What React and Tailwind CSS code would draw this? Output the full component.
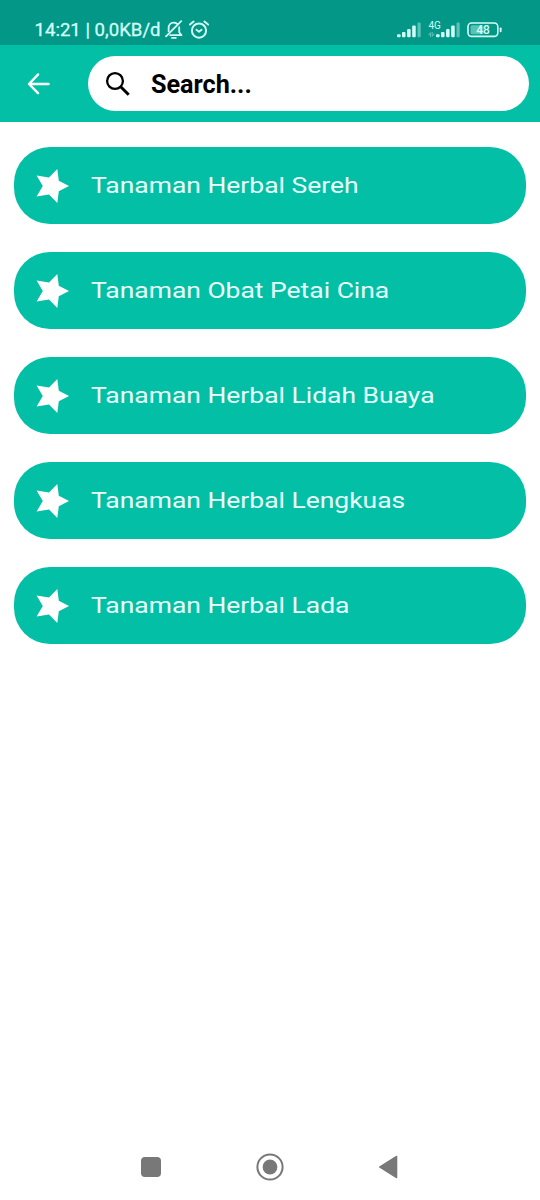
import React from 'react';

const tanaman = [
  { nama: 'Tanaman Herbal Sereh' },
  { nama: 'Tanaman Obat Petai Cina' },
  { nama: 'Tanaman Herbal Lidah Buaya' },
  { nama: 'Tanaman Herbal Lengkuas' },
  { nama: 'Tanaman Herbal Lada' },
];

const BellOff = () => (
  <svg className="w-[18px] h-5 shrink-0" viewBox="0 0 18 20" fill="none" stroke="currentColor" strokeWidth="1.8" strokeLinecap="round" strokeLinejoin="round">
    <path d="M3.6 11.2V8.2C3.6 4.8 5.8 2.6 8.6 2.6c1.4 0 2.6.4 3.5 1.2" />
    <path d="M14.2 7.2v5l2.3 3H5.2" />
    <path d="M16.2 1.2L1 16.4" />
    <path d="M7 17.9h3.8" strokeWidth="1.8" />
  </svg>
);

const Alarm = () => (
  <svg className="w-5 h-5 shrink-0" viewBox="0 0 20 20" fill="none" stroke="currentColor" strokeLinecap="round" strokeLinejoin="round">
    <circle cx="10" cy="10.6" r="7.1" strokeWidth="2" />
    <path d="M7.4 9.8l2.6 2 2.6-2" strokeWidth="1.8" />
    <path d="M.9 4.6L4.6 1.6M19.1 4.6l-3.7-3" strokeWidth="1.9" />
  </svg>
);

const Signal = () => (
  <svg className="w-6 h-4 shrink-0" viewBox="0 0 24 16" fill="currentColor">
    <rect x="0" y="12.3" width="3.6" height="3" rx="1" />
    <rect x="5" y="10" width="3.5" height="5.3" rx="1" />
    <rect x="10.1" y="7" width="3.5" height="8.3" rx="1" />
    <rect x="15.2" y="3.4" width="3.5" height="11.9" rx="1" />
    <rect x="20.5" y="0.5" width="3.2" height="14.8" rx="1" opacity=".42" />
  </svg>
);

const Battery = () => (
  <svg className="w-[35px] h-4 shrink-0" viewBox="0 0 35 16">
    <rect x="1" y="1" width="29.8" height="13.4" rx="3.6" fill="none" stroke="currentColor" strokeWidth="1.6" />
    <rect x="3.6" y="3.2" width="13" height="9" rx="1.5" fill="currentColor" opacity=".42" />
    <rect x="32.7" y="5.4" width="1.9" height="4.8" rx=".9" fill="currentColor" />
  </svg>
);

const Star = () => (
  <svg className="w-[34px] h-[34px] shrink-0" viewBox="-17 -17 34 34" fill="#fff">
    <path d="M17 0L6.8 5.2 5.3 17-3 8.6-15.4 10.5-9.2 0-15.4-10.5-3-8.6 5.3-17 6.8-5.2z" />
  </svg>
);

const StatusBar = () => (
  <div className="h-[45px] bg-[#029786] text-[#d3fff8] flex items-start justify-between pl-[34.5px] pr-[38px]">
    <div className="flex items-center mt-[19px] h-[21px]">
      <span className="text-[18.6px] leading-[21px] w-[130px] pt-0.5 whitespace-nowrap [-webkit-text-stroke:0.3px]">14:21 | 0,0KB/d</span>
      <BellOff />
      <div className="w-[6.5px]"></div>
      <Alarm />
    </div>
    <div className="flex mt-[22px] h-4">
      <Signal />
      <div className="relative ml-[15px]">
        <span className="absolute -left-[7.5px] -top-[2px] text-[10px] leading-[11px]">4G</span>
        <svg className="absolute -left-2 top-2.5 w-[7px] h-[5px] opacity-50" viewBox="0 0 7 5" fill="none" stroke="currentColor" strokeWidth=".9">
          <path d="M.5 3.2L2.4.7V5M4.2 0v4.3L6.3 1.6" />
        </svg>
        <Signal />
      </div>
      <div className="relative ml-[7px]">
        <Battery />
        <span className="absolute left-0 top-0 w-8 text-center text-[12px] leading-[16px] font-medium">48</span>
      </div>
    </div>
  </div>
);

const Header = () => (
  <header className="h-[77px] bg-[#03bfa6] flex items-start pl-[27px] pr-[11px]">
    <button className="mt-[27px] w-[23px] h-[23px] text-white">
      <svg viewBox="0 0 23 23" fill="none" stroke="currentColor" strokeWidth="2.5" strokeLinecap="round" strokeLinejoin="round">
        <path d="M21.5 12H2.5M11 2.5L2 12l9 9.2" />
      </svg>
    </button>
    <div className="ml-[38px] mt-[11px] flex-1 h-[55px] rounded-full bg-white flex items-center pl-[17px]">
      <svg className="w-[26px] h-[26px]" viewBox="0 0 26 26" fill="none" stroke="#000">
        <circle cx="10" cy="10" r="7.9" strokeWidth="2.3" />
        <path d="M15.7 15.7l8 8" strokeWidth="3" />
      </svg>
      <span className="ml-5 pt-0.5 text-[25.2px] leading-[28px] font-bold text-black">Search...</span>
    </div>
  </header>
);

const NavBar = () => (
  <nav className="h-[65px] pb-px flex items-center text-[#787878]">
    <div className="ml-[141px] w-5 h-5 rounded-[4px] bg-[#787878]"></div>
    <svg className="ml-[95px] w-7 h-7" viewBox="0 0 28 28">
      <circle cx="14" cy="14" r="12.6" fill="none" stroke="currentColor" strokeWidth="2" />
      <circle cx="14" cy="14" r="7.4" fill="currentColor" />
    </svg>
    <svg className="ml-[94px] w-5 h-6" viewBox="0 0 20 24" fill="currentColor" stroke="currentColor" strokeWidth="1.4" strokeLinejoin="round">
      <path d="M1.6 12L18.6 1.4v21.2z" />
    </svg>
  </nav>
);

const App = () => {
  return (
    <div className="w-[540px] h-[1200px] bg-white flex flex-col font-['Roboto',sans-serif] overflow-hidden">
      <StatusBar />
      <Header />

      {/* Daftar tanaman */}
      <main className="flex-1 flex flex-col gap-[28px] pt-[25.4px] px-3.5">
        {tanaman.map((t) => (
          <div key={t.nama} className="h-[77px] rounded-[36px] bg-[#03bfa6] flex items-center pl-[21px]">
            <Star />
            <span className="ml-[22.4px] text-[22px] leading-[26px] text-[#eafffb] whitespace-nowrap origin-left scale-x-[1.202]">{t.nama}</span>
          </div>
        ))}
      </main>

      <NavBar />
    </div>
  );
};

export default App;
